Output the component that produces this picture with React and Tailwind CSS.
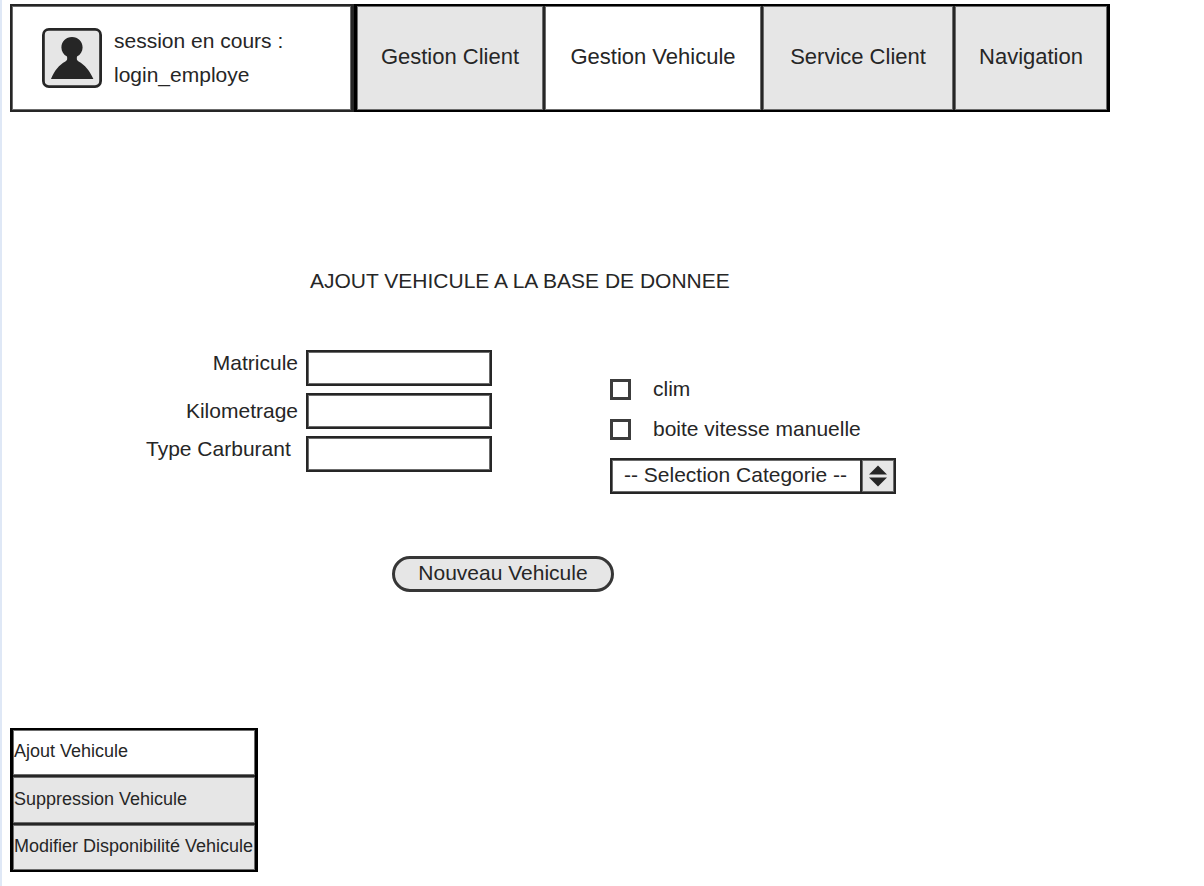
const navItems = [
  { label: "Gestion Client" },
  { label: "Gestion Vehicule", active: true },
  { label: "Service Client" },
  { label: "Navigation" },
];

const sideItems = [
  { label: "Ajout Vehicule", active: true },
  { label: "Suppression Vehicule" },
  { label: "Modifier Disponibilité Vehicule" },
];

const fields = [
  { id: "matricule", label: "Matricule", labelClass: "self-start" },
  { id: "kilometrage", label: "Kilometrage", labelClass: "self-center" },
  { id: "carburant", label: "Type Carburant", labelClass: "self-start pr-2" },
];

const options = [
  { id: "clim", label: "clim" },
  { id: "boite", label: "boite vitesse manuelle" },
];

function UserIcon() {
  return (
    <svg className="size-[60px] shrink-0" viewBox="0 0 60 60" aria-hidden="true">
      <rect x="1.4" y="1.4" width="57.2" height="57.2" rx="5.5" fill="#e6e6e6" stroke="#262626" strokeWidth="2.8" />
      <path
        d="M30 9C24 9 19.4 13.6 19.4 19.4C19.4 23.4 21.6 26.6 25 28.6C25.4 31 25.4 32.4 23.4 33.4C17.4 36.4 12 43 9 51H51.4C48 43 42.6 36.4 36.6 33.4C34.6 32.4 34.6 31 35 28.6C38.4 26.6 40.6 23.4 40.6 19.4C40.6 13.6 36 9 30 9Z"
        fill="#262626"
      />
    </svg>
  );
}

function Header() {
  return (
    <header className="flex h-[108px] w-full max-w-[1100px]">
      <div className="flex w-[344px] shrink-0 items-center gap-3 border-2 border-r-3 border-[#262626] px-[30px] inset-ring inset-ring-[#6c6c6c]">
        <UserIcon />
        <p className="leading-[34px]">
          session en cours :<br />
          login_employe
        </p>
      </div>
      <nav className="grid flex-1 grid-cols-[188fr_218fr_192fr_152fr] border-2 border-x-3 border-black text-[22px]">
        {navItems.map((item) => (
          <a
            key={item.label}
            href="#"
            aria-current={item.active ? "page" : undefined}
            className={`flex items-center justify-center border-r-2 border-[#262626] pb-1 whitespace-nowrap inset-ring inset-ring-[#6c6c6c] last:border-r-0 ${
              item.active ? "bg-white" : "bg-[#e6e6e6]"
            }`}
          >
            {item.label}
          </a>
        ))}
      </nav>
    </header>
  );
}

function CategorySelect() {
  return (
    <div className="grid w-[286px] grid-cols-[1fr_36px] grid-rows-[36px]">
      <select
        aria-label="Selection Categorie"
        className="col-span-2 col-start-1 row-start-1 h-9 appearance-none border-2 border-[#262626] bg-white pb-0.5 pl-3 leading-7 inset-ring inset-ring-[#6c6c6c]"
      >
        <option>-- Selection Categorie --</option>
      </select>
      <span className="pointer-events-none col-start-2 row-start-1 flex items-center justify-center border-2 border-[#262626] bg-[#e6e6e6] inset-ring inset-ring-[#6c6c6c]">
        <svg className="h-[22px] w-[18px]" viewBox="0 0 18 22" fill="#262626" aria-hidden="true">
          <path d="M9 0.5L18 9.5H0Z" />
          <path d="M0 12.5H18L9 21.5Z" />
        </svg>
      </span>
    </div>
  );
}

function VehicleForm() {
  return (
    <form className="w-[750px]">
      <h1 className="pl-[164px] leading-8">AJOUT VEHICULE A LA BASE DE DONNEE</h1>
      <div className="mt-[53px] flex items-start justify-between">
        <div className="grid grid-cols-[152px_186px] gap-x-2 gap-y-[7px]">
          {fields.map((field) => (
            <div key={field.id} className="col-span-2 grid grid-cols-subgrid">
              <label
                htmlFor={field.id}
                className={`text-right leading-[26px] whitespace-nowrap ${field.labelClass}`}
              >
                {field.label}
              </label>
              <input
                id={field.id}
                type="text"
                className="h-9 w-full border-2 border-[#262626] bg-white px-2 inset-ring inset-ring-[#6c6c6c]"
              />
            </div>
          ))}
        </div>
        <div className="pt-[19px]">
          {options.map((option) => (
            <div key={option.id} className="flex h-10 items-center gap-[22px]">
              <input
                id={option.id}
                type="checkbox"
                className="size-[21px] appearance-none border-3 border-[#3c3c3c] bg-white checked:bg-[#262626]"
              />
              <label htmlFor={option.id} className="leading-7">
                {option.label}
              </label>
            </div>
          ))}
          <div className="pt-[9px]">
            <CategorySelect />
          </div>
        </div>
      </div>
      <button
        type="button"
        className="mt-[62px] ml-[246px] flex h-9 w-[222px] items-center justify-center rounded-full border-3 border-[#363636] bg-[#e6e6e6] pb-0.5"
      >
        Nouveau Vehicule
      </button>
    </form>
  );
}

function SideMenu() {
  return (
    <nav className="flex w-[248px] flex-col border-2 border-x-3 border-black text-[18px]">
      {sideItems.map((item) => (
        <a
          key={item.label}
          href="#"
          aria-current={item.active ? "page" : undefined}
          className={`flex h-12 items-center border-b-2 border-[#262626] pb-0.5 pl-px whitespace-nowrap inset-ring inset-ring-[#6c6c6c] first:h-[47px] last:h-[45px] last:border-b-0 ${
            item.active ? "bg-white" : "bg-[#e6e6e6]"
          }`}
        >
          {item.label}
        </a>
      ))}
    </nav>
  );
}

export default function App() {
  return (
    <div className="flex min-h-screen flex-col border-l-2 border-[#dfe8f6] bg-white px-2 pt-1 pb-3.5 font-['Liberation_Sans',Arial,sans-serif] text-[21px] text-[#262626]">
      <Header />
      <main className="pt-[153px] pl-[136px]">
        <VehicleForm />
      </main>
      <div className="mt-auto pt-8">
        <SideMenu />
      </div>
    </div>
  );
}
